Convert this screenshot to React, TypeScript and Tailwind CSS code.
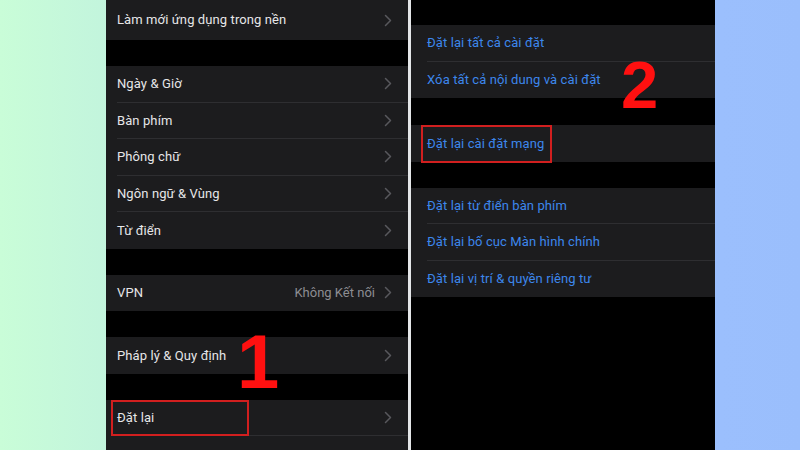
import React from "react";

const Chevron = () => (
  <svg width="8" height="13" viewBox="0 0 8 13" className="shrink-0">
    <polyline points="1.5,1.5 6.5,6.5 1.5,11.5" fill="none" stroke="#58585d" strokeWidth="1.5" strokeLinecap="round" strokeLinejoin="round" />
  </svg>
);

type RowProps = { label: string; value?: string; last?: boolean; chevron?: boolean; blue?: boolean };

const Row = ({ label, value, last, chevron = true, blue }: RowProps) => (
  <div className="flex h-[36.5px] shrink-0 items-center bg-[#1c1c1e] pl-[11px]">
    <div className={`flex h-full flex-1 items-center pr-[16px] ${last ? "" : "border-b border-[#2e2e31]"}`}>
      <span className={`flex-1 text-[13px] tracking-[0.1px] ${blue ? "text-[#3d87ec]" : "text-[#e6e6e8]"}`}>{label}</span>
      {value && <span className="mr-[9px] text-[13px] text-[#8d8d92]">{value}</span>}
      {chevron && <Chevron />}
    </div>
  </div>
);

const Gap = ({ h }: { h: string }) => <div className={`${h} shrink-0 bg-black`} />;

export default function App() {
  return (
    <div
      className="flex h-[450px] w-[800px] overflow-hidden bg-[linear-gradient(to_right,#c9fdd8_0%,#c2f4dd_14%,#aed4f0_50%,#9bbffd_90%,#9abefc_100%)]"
      style={{ fontFamily: "Roboto, 'Noto Sans', sans-serif" }}
    >
      <div className="w-[106px] shrink-0" />
      {/* Left panel */}
      <div className="relative flex h-[450px] w-[302px] shrink-0 flex-col overflow-hidden bg-black">
        <div className="flex h-[40px] shrink-0 items-center bg-[#1c1c1e] pl-[11px] pr-[16px]">
          <span className="flex-1 text-[13px] tracking-[0.1px] text-[#e6e6e8]">Làm mới ứng dụng trong nền</span>
          <Chevron />
        </div>
        <Gap h="h-[26px]" />
        <Row label="Ngày & Giờ" />
        <Row label="Bàn phím" />
        <Row label="Phông chữ" />
        <Row label="Ngôn ngữ & Vùng" />
        <Row label="Từ điển" last />
        <Gap h="h-[26px]" />
        <Row label="VPN" value="Không Kết nối" last />
        <Gap h="h-[26px]" />
        <Row label="Pháp lý & Quy định" last />
        <Gap h="h-[26px]" />
        <Row label="Đặt lại" />
        <div className="flex h-[36.5px] shrink-0 items-start bg-[#1c1c1e] pl-[11px] pt-[11px]">
          <span className="text-[13px] text-[#d8d8da]">Tắt máy</span>
        </div>
        {/* red box */}
        <div className="absolute left-[5px] top-[400px] h-[36px] w-[138px] border-2 border-[#d11f1f]" />
        <div
          className="absolute left-[131px] top-[324px] text-[76px] font-bold leading-none text-[#ff1010]"
          style={{ fontFamily: "'Liberation Sans', Arial, sans-serif" }}
        >
          1
        </div>
      </div>
      {/* Divider */}
      <div className="w-[3px] shrink-0 bg-[#e4e6e8]" />
      {/* Right panel */}
      <div className="relative flex h-[450px] w-[304px] shrink-0 flex-col bg-black">
        <Gap h="h-[25px]" />
        <div className="shrink-0 bg-[#1c1c1e] pl-[5px]">
          <Row label="Đặt lại tất cả cài đặt" chevron={false} blue />
          <Row label="Xóa tất cả nội dung và cài đặt" chevron={false} blue last />
        </div>
        <Gap h="h-[27px]" />
        <div className="shrink-0 bg-[#1c1c1e] pl-[5px]">
          <Row label="Đặt lại cài đặt mạng" chevron={false} blue last />
        </div>
        <Gap h="h-[26px]" />
        <div className="shrink-0 bg-[#1c1c1e] pl-[5px]">
          <Row label="Đặt lại từ điển bàn phím" chevron={false} blue />
          <Row label="Đặt lại bố cục Màn hình chính" chevron={false} blue />
          <Row label="Đặt lại vị trí & quyền riêng tư" chevron={false} blue last />
        </div>
        <div className="flex-1 bg-black" />
        {/* red box */}
        <div className="absolute left-[10px] top-[125px] h-[38px] w-[131px] border-2 border-[#d11f1f]" />
        <div
          className="absolute left-[210px] top-[51px] text-[67px] font-bold leading-none text-[#ff1010]"
          style={{ fontFamily: "'Liberation Sans', Arial, sans-serif" }}
        >
          2
        </div>
      </div>
      <div className="flex-1" />
    </div>
  );
}
